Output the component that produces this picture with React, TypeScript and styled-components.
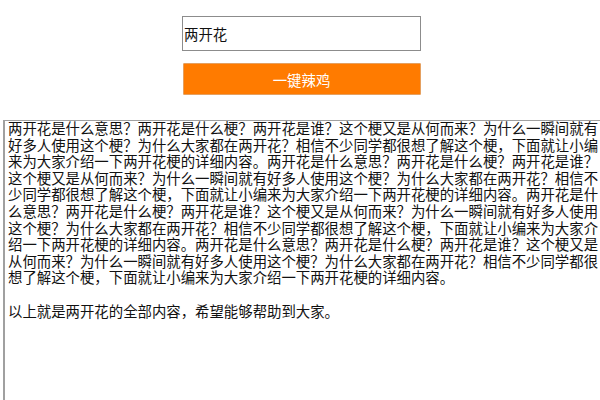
import React from "react";
import styled, { createGlobalStyle } from "styled-components";

const GlobalStyle = createGlobalStyle`
  html, body {
    margin: 0;
    padding: 0;
    background: #ffffff;
    overflow: hidden;
  }
  * { box-sizing: border-box; }
`;

const Page = styled.div`
  width: 600px;
  height: 400px;
  overflow: hidden;
  padding-top: 16px;
`;

const Form = styled.div`
  display: flex;
  flex-direction: column;
  align-items: center;
  gap: 12px;
  padding-left: 3px;
`;

const SearchInput = styled.input`
  width: 239px;
  height: 35px;
  border: 1.5px solid #8c8c8c;
  padding: 0 1px;
  font-family: "Noto Sans CJK SC", sans-serif;
  font-size: 14.4px;
  color: #111;
  background: #fff;
  outline: none;
`;

const ActionButton = styled.button`
  width: 238px;
  height: 32px;
  border: 1px solid #e5a060;
  border-radius: 1px;
  background: #ff7b00;
  color: #ffffff;
  font-family: "Noto Sans CJK SC", sans-serif;
  font-size: 14.4px;
  cursor: pointer;
  padding: 0;
`;

const Result = styled.div`
  margin: 25px 0 0 3px;
  width: 640px;
  height: 300px;
  border-top: 1.5px solid #a0a0a0;
  border-left: 2px solid #a0a0a0;
  padding: 0 3px;
  font-family: "Liberation Serif", "Noto Sans CJK SC", serif;
  font-size: 14.4px;
  line-height: 16.6px;
  color: #111;
`;

const Content = styled.div`
  width: 592px;
`;

const Paragraph = styled.p`
  margin: 0 0 16.6px 0;
`;

const base =
  "两开花是什么意思？两开花是什么梗？两开花是谁？这个梗又是从何而来？为什么一瞬间就有好多人使用这个梗？为什么大家都在两开花？相信不少同学都很想了解这个梗，下面就让小编来为大家介绍一下两开花梗的详细内容。";

const paragraphs = [base.repeat(4), "以上就是两开花的全部内容，希望能够帮助到大家。"];

export default function App() {
  return (
    <>
      <GlobalStyle />
      <Page>
        <Form>
          <SearchInput defaultValue="两开花" />
          <ActionButton>一键辣鸡</ActionButton>
        </Form>
        <Result>
          <Content>
            {paragraphs.map((p, i) => (
              <Paragraph key={i}>{p}</Paragraph>
            ))}
          </Content>
        </Result>
      </Page>
    </>
  );
}
